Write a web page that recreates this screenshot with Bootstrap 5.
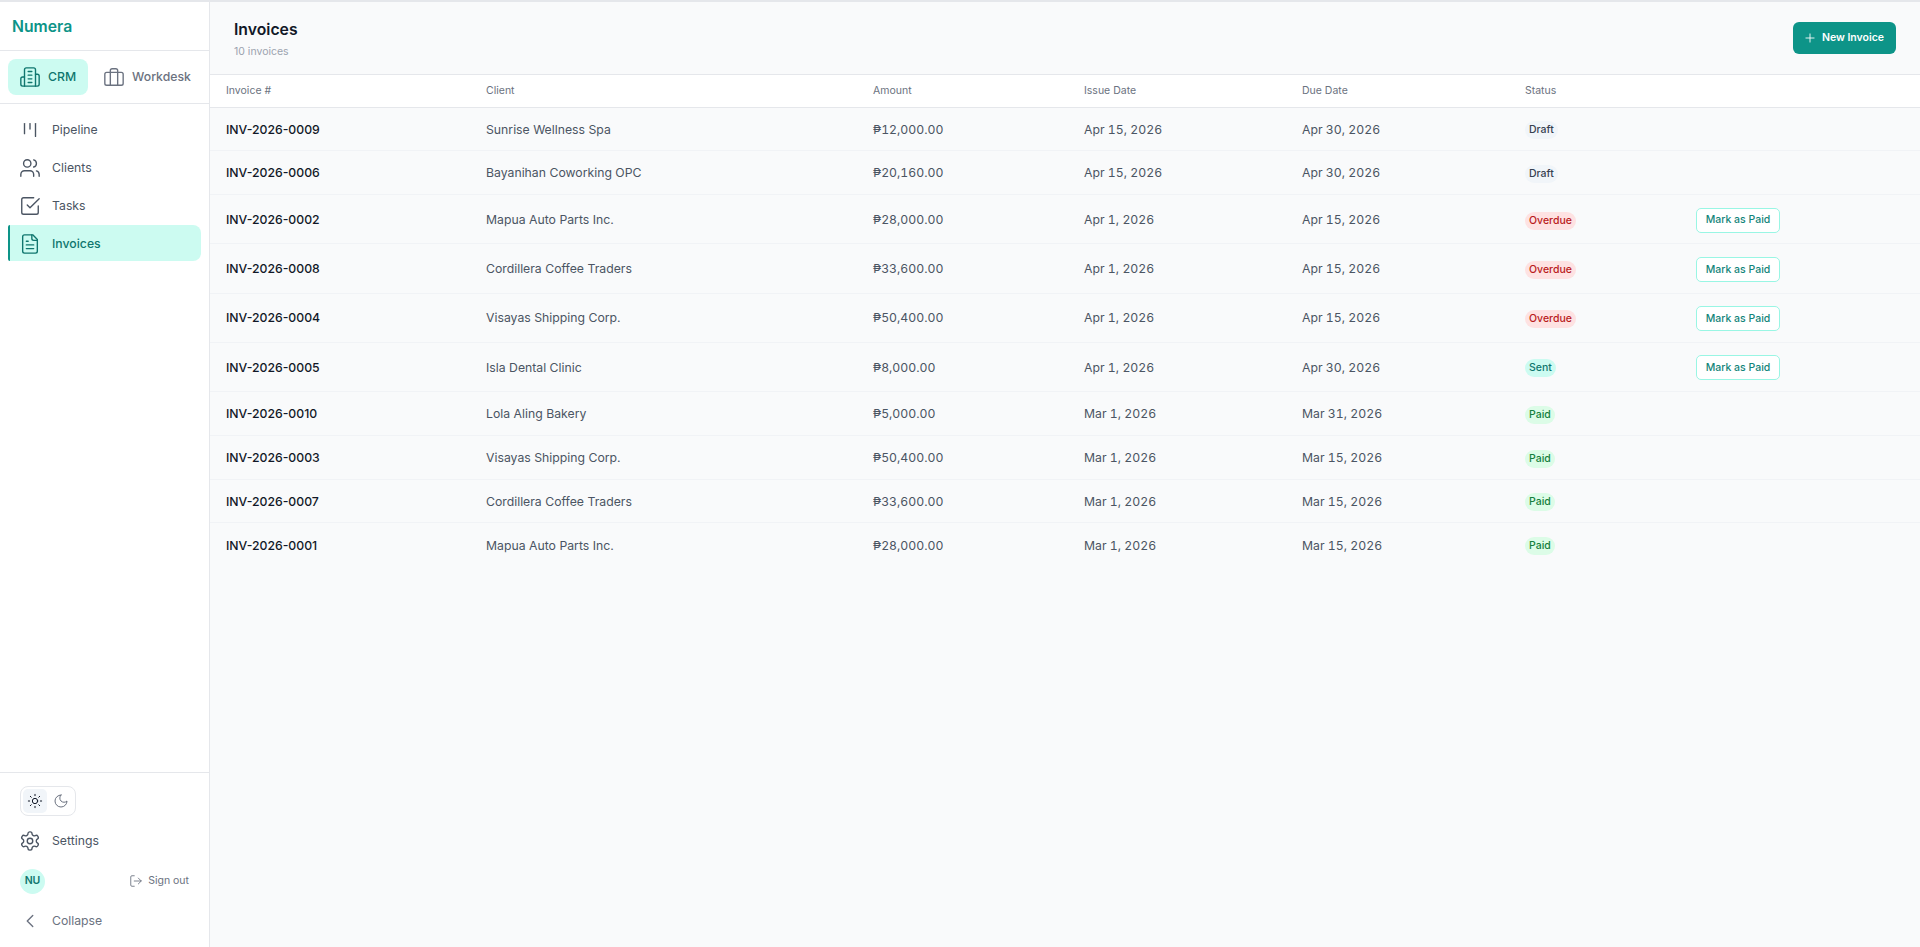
<!DOCTYPE html>
<html lang="en">
<head>
  <meta charset="UTF-8">
  <meta name="viewport" content="width=device-width, initial-scale=1.0">
  <title>Invoices | Numera</title>
  <link href="https://cdn.jsdelivr.net/npm/bootstrap@5.3.3/dist/css/bootstrap.min.css" rel="stylesheet">
  <style>
    body { font-family: "Inter", "Liberation Sans", sans-serif; background: #f9fafb; overflow: hidden; }
    .app-shell { height: 947px; border-top: 2px solid #e5e7eb; }
    svg.ico { width: 22px; height: 22px; fill: none; stroke: currentColor; stroke-width: 1.5; stroke-linecap: round; stroke-linejoin: round; flex-shrink: 0; }

    /* sidebar */
    .side { width: 210px; background: #fff; border-right: 1px solid #e5e7eb; flex-shrink: 0; }
    .brand { height: 49px; padding: 2px 0 0 12px; color: #0d9488; font-size: 15.75px; font-weight: 600; border-bottom: 1px solid #e5e7eb; }
    .mod-switch { height: 53px; padding: 8px; gap: 4px; border-bottom: 1px solid #e5e7eb; }
    .mod-btn { height: 36px; padding: 0 12px 0 11px; gap: 7px; border-radius: 8px; font-size: 12.25px; font-weight: 500; color: #6b7280; }
    .mod-btn.on { background: #ccfbf1; color: #0f766e; }
    .side-nav { padding: 7px 8px; gap: 2px; }
    .side-nav .side-link { padding-top: 2px; }
    .side-link { height: 36px; padding-left: 11px; gap: 11px; border-radius: 8px; font-size: 12.25px; font-weight: 400; color: #4b5563; text-decoration: none; }
    .side-link.on { background: #ccfbf1; color: #0f766e; border-left: 2px solid #0d9488; border-radius: 2px 8px 8px 2px; padding-left: 9px; font-weight: 500; }
    .side-link.muted { color: #6b7280; }
    .side-foot { border-top: 1px solid #e5e7eb; padding: 13px 8px 8px; }
    .theme-box { width: 56px; height: 30px; margin-left: 12px; margin-bottom: 7px; padding: 2px; border: 1px solid #e5e7eb; border-radius: 8px; gap: 2px; }
    .theme-opt { width: 24px; height: 24px; border-radius: 5px; color: #6b7280; }
    .theme-opt.on { background: #f1f5f9; color: #111827; }
    .theme-opt svg.ico { width: 16px; height: 16px; }
    .avatar { width: 25px; height: 25px; border-radius: 50%; background: #ccfbf1; color: #0f766e; font-size: 10.5px; font-weight: 600; }
    .user-row { height: 40px; padding: 4px 12px 0; margin-bottom: 4px; }
    .sign-out { font-size: 10.5px; color: #6b7280; gap: 5px; }
    .sign-out svg.ico { width: 14px; height: 14px; }

    /* main */
    .page-head { height: 73px; padding: 0 24px; border-bottom: 1px solid #e5e7eb; }
    .page-title { font-size: 15.75px; font-weight: 600; color: #111827; line-height: 24px; margin: 0 0 2px; }
    .page-sub { font-size: 10.5px; color: #9ca3af; line-height: 15px; }
    .btn-new { background: #0d9488; color: #fff; font-size: 10.5px; font-weight: 600; height: 32px; width: 103px; padding: 0 2px 0 0; gap: 5px; border-radius: 6px; border: 0; }
    .btn-new:hover { background: #0f766e; color: #fff; }
    .btn-new svg.ico { width: 14px; height: 14px; }

    .inv-table { table-layout: fixed; width: 1710px; margin: 0; --bs-table-bg: transparent; font-size: 12.25px; }
    .inv-table th { background: #fff; font-size: 10.5px; font-weight: 400; color: #6b7280; height: 32px; padding: 1px 16px 0; border-bottom: 1px solid #e5e7eb; vertical-align: middle; }
    .inv-table td { padding: 2px 16px 0; height: 43.75px; color: #4b5563; border-bottom: 1px solid #f1f3f6; vertical-align: middle; }
    .inv-table tr.has-action td { height: 49.25px; }
    .inv-table tr:last-child td { border-bottom: 0; }
    .inv-table td.inv-no { color: #111827; font-weight: 500; }
    .inv-table td.num { font-variant-numeric: tabular-nums; }
    .pill { display: inline-block; font-size: 10.5px; font-weight: 500; line-height: 18px; padding: 0 4px; border-radius: 9px; }
    .pill-draft { background: #f1f5f9; color: #374151; }
    .pill-overdue { background: #fee2e2; color: #b91c1c; }
    .pill-sent { background: #ccfbf1; color: #0f766e; }
    .pill-paid { background: #dcfce7; color: #15803d; }
    .btn-paid { background: #fff; color: #14857a; border: 1px solid #99f6e4; font-size: 10.5px; font-weight: 500; height: 25px; width: 84px; padding: 0; border-radius: 5px; }
    .btn-paid:hover { background: #f0fdfa; color: #14857a; border-color: #99f6e4; }
  </style>
</head>
<body>

  <div class="app-shell d-flex">

    <!-- Sidebar -->
    <aside class="side d-flex flex-column">
      <div class="brand d-flex align-items-center">Numera</div>

      <div class="mod-switch d-flex">
        <div class="mod-btn on d-flex align-items-center">
          <svg class="ico" viewBox="0 0 24 24"><path d="M6 22V4a2 2 0 0 1 2-2h8a2 2 0 0 1 2 2v18Z"/><path d="M6 12H4a2 2 0 0 0-2 2v6a2 2 0 0 0 2 2h2"/><path d="M18 9h2a2 2 0 0 1 2 2v9a2 2 0 0 1-2 2h-2"/><path d="M10 6h4"/><path d="M10 10h4"/><path d="M10 14h4"/><path d="M10 18h4"/></svg>
          CRM
        </div>
        <div class="mod-btn d-flex align-items-center">
          <svg class="ico" viewBox="0 0 24 24"><rect x="2" y="7" width="20" height="14" rx="2"/><path d="M16 21V5a2 2 0 0 0-2-2h-4a2 2 0 0 0-2 2v16"/></svg>
          Workdesk
        </div>
      </div>

      <nav class="side-nav d-flex flex-column flex-grow-1">
        <a class="side-link d-flex align-items-center" href="#">
          <svg class="ico" viewBox="0 0 24 24"><path d="M6 5v11"/><path d="M12 5v6"/><path d="M18 5v14"/></svg>
          Pipeline
        </a>
        <a class="side-link d-flex align-items-center" href="#">
          <svg class="ico" viewBox="0 0 24 24"><path d="M16 21v-2a4 4 0 0 0-4-4H6a4 4 0 0 0-4 4v2"/><circle cx="9" cy="7" r="4"/><path d="M22 21v-2a4 4 0 0 0-3-3.87"/><path d="M16 3.13a4 4 0 0 1 0 7.75"/></svg>
          Clients
        </a>
        <a class="side-link d-flex align-items-center" href="#">
          <svg class="ico" viewBox="0 0 24 24"><path d="m9 11 3 3L22 4"/><path d="M21 12v7a2 2 0 0 1-2 2H5a2 2 0 0 1-2-2V5a2 2 0 0 1 2-2h11"/></svg>
          Tasks
        </a>
        <a class="side-link on d-flex align-items-center" href="#">
          <svg class="ico" viewBox="0 0 24 24"><path d="M15 2H6a2 2 0 0 0-2 2v16a2 2 0 0 0 2 2h12a2 2 0 0 0 2-2V7Z"/><path d="M14 2v4a2 2 0 0 0 2 2h4"/><path d="M10 9H8"/><path d="M16 13H8"/><path d="M16 17H8"/></svg>
          Invoices
        </a>
      </nav>

      <div class="side-foot">
        <div class="theme-box d-flex">
          <div class="theme-opt on d-flex align-items-center justify-content-center">
            <svg class="ico" viewBox="0 0 24 24"><circle cx="12" cy="12" r="4"/><path d="M12 2v2"/><path d="M12 20v2"/><path d="m4.93 4.93 1.41 1.41"/><path d="m17.66 17.66 1.41 1.41"/><path d="M2 12h2"/><path d="M20 12h2"/><path d="m6.34 17.66-1.41 1.41"/><path d="m19.07 4.93-1.41 1.41"/></svg>
          </div>
          <div class="theme-opt d-flex align-items-center justify-content-center">
            <svg class="ico" viewBox="0 0 24 24"><path d="M12 3a6 6 0 0 0 9 9 9 9 0 1 1-9-9Z"/></svg>
          </div>
        </div>
        <a class="side-link d-flex align-items-center" href="#">
          <svg class="ico" viewBox="0 0 24 24"><path d="M12.22 2h-.44a2 2 0 0 0-2 2v.18a2 2 0 0 1-1 1.73l-.43.25a2 2 0 0 1-2 0l-.15-.08a2 2 0 0 0-2.73.73l-.22.38a2 2 0 0 0 .73 2.73l.15.1a2 2 0 0 1 1 1.72v.51a2 2 0 0 1-1 1.74l-.15.09a2 2 0 0 0-.73 2.73l.22.38a2 2 0 0 0 2.73.73l.15-.08a2 2 0 0 1 2 0l.43.25a2 2 0 0 1 1 1.73V20a2 2 0 0 0 2 2h.44a2 2 0 0 0 2-2v-.18a2 2 0 0 1 1-1.73l.43-.25a2 2 0 0 1 2 0l.15.08a2 2 0 0 0 2.73-.73l.22-.39a2 2 0 0 0-.73-2.73l-.15-.08a2 2 0 0 1-1-1.74v-.5a2 2 0 0 1 1-1.74l.15-.09a2 2 0 0 0 .73-2.73l-.22-.38a2 2 0 0 0-2.73-.73l-.15.08a2 2 0 0 1-2 0l-.43-.25a2 2 0 0 1-1-1.73V4a2 2 0 0 0-2-2z"/><circle cx="12" cy="12" r="3"/></svg>
          Settings
        </a>
        <div class="user-row d-flex align-items-center justify-content-between">
          <div class="avatar d-flex align-items-center justify-content-center">NU</div>
          <div class="sign-out d-flex align-items-center">
            <svg class="ico" viewBox="0 0 24 24"><path d="M9 21H5a2 2 0 0 1-2-2V5a2 2 0 0 1 2-2h4"/><path d="m16 17 5-5-5-5"/><path d="M21 12H9"/></svg>
            Sign out
          </div>
        </div>
        <a class="side-link muted d-flex align-items-center" href="#">
          <svg class="ico" viewBox="0 0 24 24"><path d="m15 18-6-6 6-6"/></svg>
          Collapse
        </a>
      </div>
    </aside>

    <!-- Main -->
    <main class="flex-grow-1">
      <div class="page-head d-flex align-items-center justify-content-between">
        <div>
          <h1 class="page-title">Invoices</h1>
          <div class="page-sub">10 invoices</div>
        </div>
        <button class="btn btn-new d-flex align-items-center justify-content-center">
          <svg class="ico" viewBox="0 0 24 24"><path d="M5 12h14"/><path d="M12 5v14"/></svg>
          New Invoice
        </button>
      </div>

      <table class="table inv-table">
        <colgroup>
          <col style="width:260px"><col style="width:387px"><col style="width:211px"><col style="width:218px"><col style="width:223px"><col style="width:171px"><col style="width:240px">
        </colgroup>
        <thead>
          <tr><th>Invoice #</th><th>Client</th><th>Amount</th><th>Issue Date</th><th>Due Date</th><th>Status</th><th></th></tr>
        </thead>
        <tbody>
          <tr><td class="inv-no">INV-2026-0009</td><td>Sunrise Wellness Spa</td><td class="num">₱12,000.00</td><td class="num">Apr 15, 2026</td><td class="num">Apr 30, 2026</td><td><span class="pill pill-draft">Draft</span></td><td></td></tr>
          <tr><td class="inv-no">INV-2026-0006</td><td>Bayanihan Coworking OPC</td><td class="num">₱20,160.00</td><td class="num">Apr 15, 2026</td><td class="num">Apr 30, 2026</td><td><span class="pill pill-draft">Draft</span></td><td></td></tr>
          <tr class="has-action"><td class="inv-no">INV-2026-0002</td><td>Mapua Auto Parts Inc.</td><td class="num">₱28,000.00</td><td class="num">Apr 1, 2026</td><td class="num">Apr 15, 2026</td><td><span class="pill pill-overdue">Overdue</span></td><td><button class="btn btn-paid">Mark as Paid</button></td></tr>
          <tr class="has-action"><td class="inv-no">INV-2026-0008</td><td>Cordillera Coffee Traders</td><td class="num">₱33,600.00</td><td class="num">Apr 1, 2026</td><td class="num">Apr 15, 2026</td><td><span class="pill pill-overdue">Overdue</span></td><td><button class="btn btn-paid">Mark as Paid</button></td></tr>
          <tr class="has-action"><td class="inv-no">INV-2026-0004</td><td>Visayas Shipping Corp.</td><td class="num">₱50,400.00</td><td class="num">Apr 1, 2026</td><td class="num">Apr 15, 2026</td><td><span class="pill pill-overdue">Overdue</span></td><td><button class="btn btn-paid">Mark as Paid</button></td></tr>
          <tr class="has-action"><td class="inv-no">INV-2026-0005</td><td>Isla Dental Clinic</td><td class="num">₱8,000.00</td><td class="num">Apr 1, 2026</td><td class="num">Apr 30, 2026</td><td><span class="pill pill-sent">Sent</span></td><td><button class="btn btn-paid">Mark as Paid</button></td></tr>
          <tr><td class="inv-no">INV-2026-0010</td><td>Lola Aling Bakery</td><td class="num">₱5,000.00</td><td class="num">Mar 1, 2026</td><td class="num">Mar 31, 2026</td><td><span class="pill pill-paid">Paid</span></td><td></td></tr>
          <tr><td class="inv-no">INV-2026-0003</td><td>Visayas Shipping Corp.</td><td class="num">₱50,400.00</td><td class="num">Mar 1, 2026</td><td class="num">Mar 15, 2026</td><td><span class="pill pill-paid">Paid</span></td><td></td></tr>
          <tr><td class="inv-no">INV-2026-0007</td><td>Cordillera Coffee Traders</td><td class="num">₱33,600.00</td><td class="num">Mar 1, 2026</td><td class="num">Mar 15, 2026</td><td><span class="pill pill-paid">Paid</span></td><td></td></tr>
          <tr><td class="inv-no">INV-2026-0001</td><td>Mapua Auto Parts Inc.</td><td class="num">₱28,000.00</td><td class="num">Mar 1, 2026</td><td class="num">Mar 15, 2026</td><td><span class="pill pill-paid">Paid</span></td><td></td></tr>
        </tbody>
      </table>
    </main>

  </div>

  <script src="https://cdn.jsdelivr.net/npm/bootstrap@5.3.3/dist/js/bootstrap.bundle.min.js"></script>
</body>
</html>
